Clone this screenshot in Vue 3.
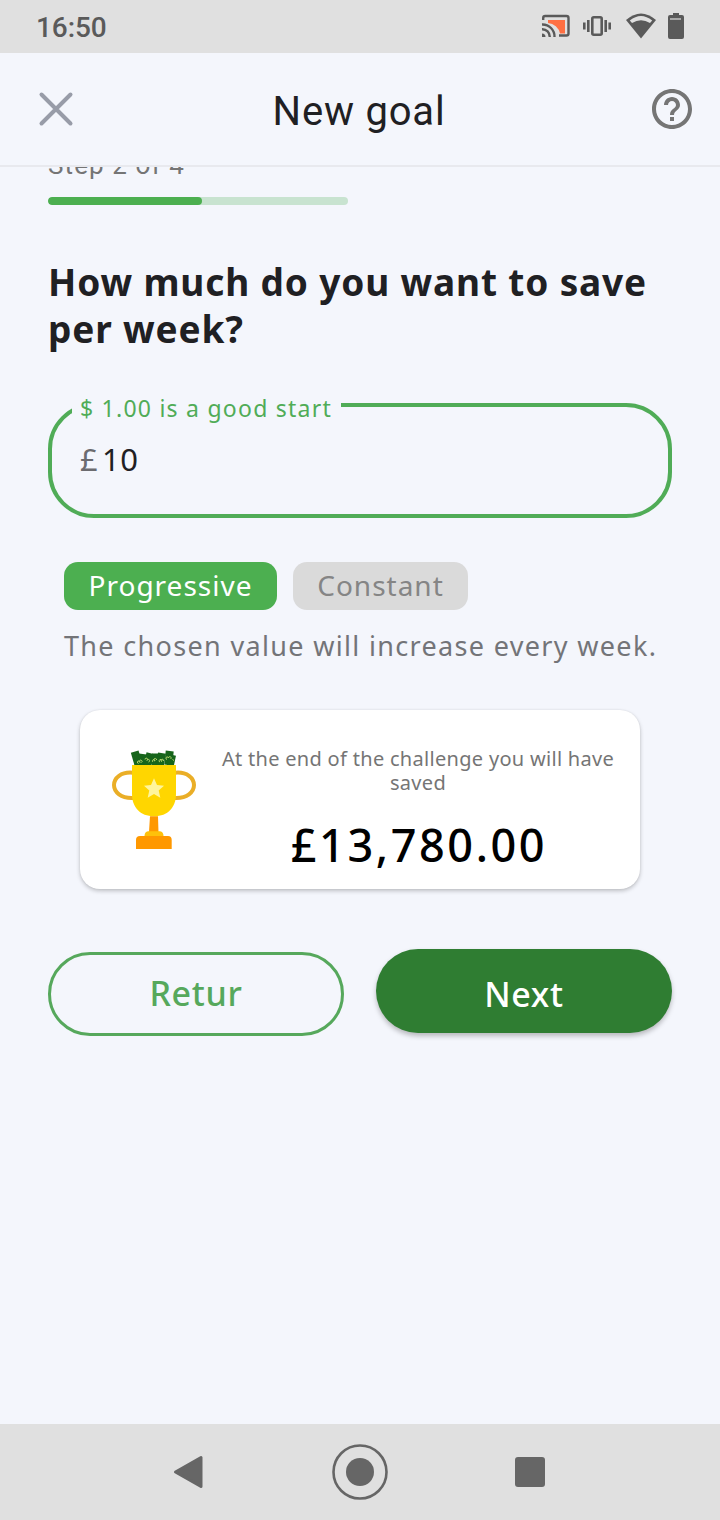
<template>
  <div class="screen">
    <div class="status-bar">
      <span class="clock">16:50</span>
      <svg class="status-icons" width="146" height="30" viewBox="541 12 146 30">
        <path d="M548 20H565V33.5H560A13 13 0 0 0 548 23Z" fill="#ff7043" />
        <g fill="none" stroke="#5a5a5a" stroke-width="2.4">
          <path d="M543.2 20V18a2 2 0 0 1 2-2H566.5a2 2 0 0 1 2 2V33.5a2 2 0 0 1-2 2H559" />
          <path d="M542 24.500A12 12 0 0 1 554.500 37" />
          <path d="M542 29.200A7.500 7.500 0 0 1 549.800 37" />
        </g>
        <path d="M542 33.500A3.500 3.500 0 0 1 545.500 37H542Z" fill="#5a5a5a" />
        <g fill="none" stroke="#5a5a5a" stroke-width="2.600">
          <rect x="592.300" y="17.300" width="9.400" height="17.400" rx="1.500" />
          <path d="M588.300 20V32M584.300 22.500V29.500M605.700 20V32M609.700 22.500V29.500" />
        </g>
        <path d="M641 38.500L626 20Q641 7 656 20Z" fill="#5a5a5a" />
        <path d="M629.800 20.500Q641 11.500 652.200 20.500L650 23Q641 17.500 632 23Z" fill="#e0e0e0" />
        <path d="M673 15V13H679V15H682A2 2 0 0 1 684 17V37A2 2 0 0 1 682 39H670A2 2 0 0 1 668 37V17A2 2 0 0 1 670 15Z" fill="#5a5a5a" />
        <path d="M670 19H681" stroke="#c4c4c4" stroke-width="1.500" />
      </svg>
    </div>

    <header class="header">
      <svg class="close" width="36" height="36" viewBox="0 0 36 36">
        <path d="M3.500 3.500L32.500 32.500M32.500 3.500L3.500 32.500" stroke="#989ca8" stroke-width="4" stroke-linecap="round" />
      </svg>
      <h1 class="title">New goal</h1>
      <svg class="help" width="48" height="48" viewBox="0 0 24 24" fill="#757575">
        <path d="M11 18h2v-2h-2v2zm1-16C6.480 2 2 6.480 2 12s4.480 10 10 10 10-4.480 10-10S17.520 2 12 2zm0 18c-4.410 0-8-3.590-8-8s3.590-8 8-8 8 3.590 8 8-3.590 8-8 8zm0-14c-2.210 0-4 1.790-4 4h2c0-1.100.9-2 2-2s2 .9 2 2c0 2-3 1.750-3 5h2c0-2.250 3-2.500 3-5 0-2.210-1.790-4-4-4z" />
      </svg>
    </header>

    <main class="content">
      <div class="step">Step 2 of 4</div>
      <div class="progress">
        <div class="progress-fill"></div>
      </div>

      <h2 class="question">How much do you want to save per week?</h2>

      <div class="field">
        <label class="field-label">$ 1.00 is a good start</label>
        <span class="currency">£</span>
        <span class="amount">{{ amount }}</span>
      </div>

      <div class="chips">
        <button
          v-for="mode in modes"
          :key="mode"
          class="chip"
          :class="[mode.toLowerCase(), { active: mode === selected }]"
          @click="selected = mode"
        >{{ mode }}</button>
      </div>
      <p class="hint">The chosen value will increase every week.</p>

      <section class="card">
        <svg class="trophy" width="84" height="100" viewBox="0 0 84 100">
          <!-- banknotes -->
          <g fill="#17651b">
            <rect x="20.500" y="1.500" width="8" height="14" transform="rotate(-16 24 8)" />
            <rect x="26" y="4" width="8" height="12" transform="rotate(8 30 10)" />
            <rect x="33" y="3" width="8" height="13" transform="rotate(14 37 9)" />
            <rect x="40" y="3.500" width="7" height="12" />
            <rect x="45" y="3" width="8" height="13" transform="rotate(10 49 9)" />
            <rect x="53" y="1" width="8" height="14" transform="rotate(6 57 8)" />
            <rect x="56" y="5" width="7" height="11" transform="rotate(12 60 10)" />
          </g>
          <g fill="none" stroke="#b5d66b" stroke-width="1">
            <path d="M26.500 13.500a1.300 1.300 0 1 1 1.500-1a1.300 1.300 0 1 1 1.500 0" />
            <path d="M33 9.500a1.300 1.300 0 1 1 2 1a1.300 1.300 0 1 1 1.500 1.500" />
            <path d="M41 12a1.300 1.300 0 1 1 2-1a1.300 1.300 0 1 1 1.500-1" />
            <path d="M48 12a1.300 1.300 0 1 1 1.500-.5a1.300 1.300 0 1 1 2-.5" />
            <path d="M55 9.500a1.300 1.300 0 1 1 1.500-1.500a1.300 1.300 0 1 1 2 1" />
            <path d="M60.500 9.500l1.500 1" />
          </g>
          <g fill="none" stroke="#eaae27" stroke-width="4">
            <path d="M21 22.700C9 21.500 2 28 2 35S9 48.500 21 48" />
            <path d="M63 22.700C75 21.500 82 28 82 35S75 48.500 63 48" />
          </g>
          <path d="M20 15H64V44C64 57 56 66.300 42 66.300S20 57 20 44Z" fill="#ffd600" />
          <path d="M42 28.300L45 35L52 35.700L46.700 40.500L48.300 47.700L42 44L35.700 47.700L37.300 40.500L32 35.700L39 35Z" fill="#fff59d" />
          <path d="M38 66.300H46L46.500 82H37Z" fill="#ff9800" />
          <path d="M36 81.300H48Q51.500 82 51.500 86H32.500Q32.500 82 36 81.300Z" fill="#ffc10a" />
          <path d="M28 86H56Q59.700 86 59.700 90V99H24V90Q24 86 28 86Z" fill="#ff9800" />
        </svg>
        <div class="card-body">
          <p class="card-text">At the end of the challenge you will have saved</p>
          <p class="total">£13,780.00</p>
        </div>
      </section>

      <div class="actions">
        <button class="btn btn-return">Retur</button>
        <button class="btn btn-next">Next</button>
      </div>
    </main>

    <nav class="nav-bar">
      <svg width="720" height="96" viewBox="0 0 720 96" fill="#666">
        <path d="M175.500 48L201 33.500V62.500Z" stroke="#666" stroke-width="3" stroke-linejoin="round" />
        <circle cx="360" cy="48" r="26.500" fill="none" stroke="#666" stroke-width="2.600" />
        <circle cx="360" cy="48" r="14" />
        <rect x="515" y="33" width="30" height="30" rx="3" />
      </svg>
    </nav>
  </div>
</template>

<script setup>
import { ref } from 'vue'

const amount = ref(10)
const modes = ['Progressive', 'Constant']
const selected = ref('Progressive')
</script>

<style>
body {
  margin: 0;
}
</style>

<style scoped>
.screen {
  width: 720px;
  height: 1520px;
  display: flex;
  flex-direction: column;
  background: #f4f6fc;
  font-family: "Noto Sans", sans-serif;
  overflow: hidden;
}

h1,
h2,
p {
  margin: 0;
}

button {
  font-family: inherit;
  border: none;
  padding: 0;
  box-sizing: border-box;
  cursor: pointer;
  white-space: nowrap;
}

.status-bar {
  flex: none;
  height: 53px;
  display: flex;
  justify-content: space-between;
  align-items: flex-start;
  padding: 0 33px 0 36px;
  box-sizing: border-box;
  background: #e0e0e0;
}

.clock {
  font: 500 28px/56px Roboto, sans-serif;
  letter-spacing: -0.1px;
  color: #5a5a5a;
}

.status-icons {
  margin-top: 12px;
}

.header {
  flex: none;
  height: 114px;
  display: flex;
  justify-content: space-between;
  align-items: center;
  padding: 0 24px 0 38px;
  box-sizing: border-box;
  border-bottom: 2px solid #e8e9ee;
}

.title {
  font: 400 40px/48px Roboto, sans-serif;
  letter-spacing: 0.8px;
  color: #1f2023;
  padding: 6px 4px 0 0;
}

.content {
  flex: 1;
  min-height: 0;
  overflow: hidden;
  display: flex;
  flex-direction: column;
  padding: 0 48px;
}

/* scrolled partly under the header */
.step {
  flex: none;
  margin-top: -18px;
  font: 400 26px/32px Roboto, sans-serif;
  letter-spacing: 1.1px;
  color: #757575;
}

.progress {
  flex: none;
  width: 300px;
  height: 8px;
  margin-top: 16px;
  border-radius: 4px;
  background: #c8e3d0;
  overflow: hidden;
}

.progress-fill {
  width: 154px;
  height: 8px;
  border-radius: 4px;
  background: #4caf50;
}

.question {
  margin-top: 53px;
  font-size: 37px;
  line-height: 47px;
  font-weight: 700;
  letter-spacing: 0.85px;
  color: #1f2023;
}

.field {
  position: relative;
  flex: none;
  height: 115px;
  margin-top: 51px;
  padding: 0 28px;
  box-sizing: border-box;
  display: flex;
  border: 4px solid #50ac57;
  border-radius: 46px;
  font-size: 31px;
  line-height: 105px;
}

.field-label {
  position: absolute;
  left: 20px;
  top: -15px;
  width: 269px;
  padding-left: 8px;
  box-sizing: border-box;
  font-size: 23px;
  line-height: 32px;
  letter-spacing: 1.24px;
  white-space: nowrap;
  color: #50ac57;
  background: #f4f6fc;
}

.currency {
  width: 22px;
  color: #6b6b6f;
}

.amount {
  letter-spacing: 0.4px;
  color: #1f2023;
}

.chips {
  display: flex;
  gap: 16px;
  margin: 44px 16px 0;
}

.chip {
  height: 48px;
  border-radius: 14px;
  background: #dadada;
  color: #858585;
  font-size: 28px;
  line-height: 44px;
  letter-spacing: 1px;
  padding-bottom: 3px;
}

.chip.progressive {
  width: 213px;
}

.chip.constant {
  width: 175px;
}

.chip.active {
  background: #4caf50;
  color: #fff;
}

.hint {
  margin: 17px 16px 0;
  font-size: 27px;
  line-height: 38px;
  letter-spacing: 1.33px;
  white-space: nowrap;
  color: #737478;
}

.card {
  flex: none;
  height: 179px;
  margin: 45px 32px 0;
  padding: 0 22px 0 32px;
  box-sizing: border-box;
  display: flex;
  background: #fff;
  border-radius: 20px;
  box-shadow: 0 2px 4px rgba(0, 0, 0, 0.22), 0 0 2px rgba(0, 0, 0, 0.08);
}

.trophy {
  flex: none;
  margin-top: 40px;
}

.card-body {
  flex: 1;
  margin-left: 22px;
  padding-top: 37px;
  text-align: center;
}

.card-text {
  font-size: 20px;
  line-height: 24px;
  letter-spacing: 0.3px;
  color: #757575;
}

.total {
  margin-top: 20px;
  font-size: 45px;
  line-height: 60px;
  font-weight: 500;
  letter-spacing: 2.6px;
  text-indent: 2px;
  color: #000;
}

.actions {
  display: flex;
  justify-content: space-between;
  align-items: flex-start;
  margin-top: 60px;
}

.btn {
  width: 296px;
  height: 84px;
  border-radius: 42px;
  font-size: 34px;
  line-height: 76px;
  font-weight: 500;
  letter-spacing: 0.7px;
}

.btn-return {
  margin-top: 3px;
  padding-bottom: 2px;
  border: 3px solid #56a85c;
  background: transparent;
  color: #56a85c;
}

.btn-next {
  padding-top: 5px;
  background: #2f7d32;
  color: #fff;
  box-shadow: 0 3px 5px rgba(0, 0, 0, 0.25);
}

.nav-bar {
  flex: none;
  height: 96px;
  background: #e0e0e0;
}
</style>
